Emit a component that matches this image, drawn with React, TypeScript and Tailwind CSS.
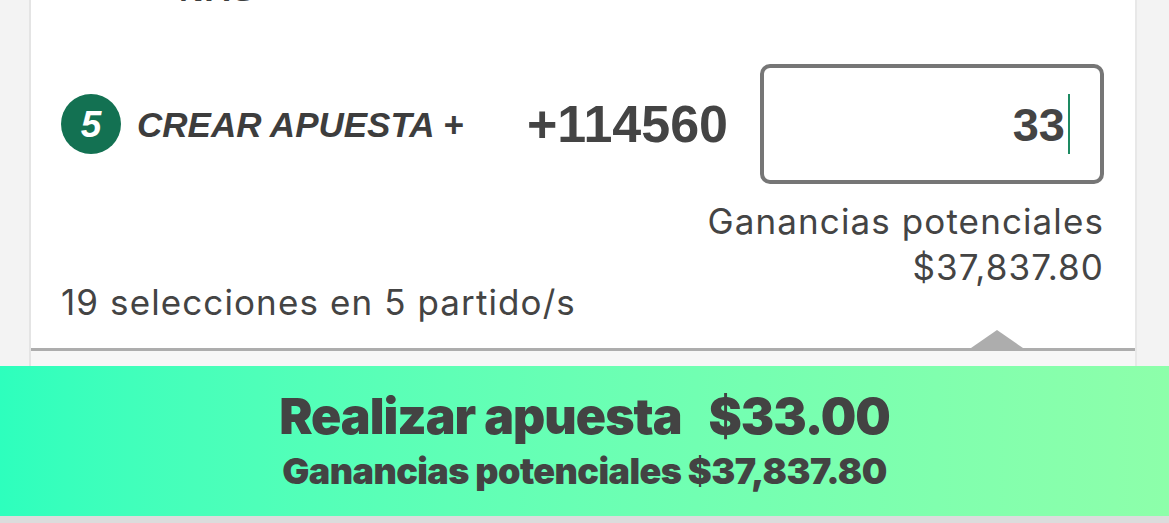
import React from "react";

const sans = "font-['Liberation_Sans',Arial,sans-serif]";
const ui = "font-['Inter','Liberation_Sans',sans-serif]";

export default function App() {
  return (
    <div className="w-[1169px] h-[523px] overflow-hidden bg-[#f1f1f1] flex flex-col">
      <div className="flex flex-1 min-h-0">
        <div className="w-[31px] border-r-2 border-[#e4e4e4] bg-[#f3f3f3]" />
        <div className="w-[1104px] bg-white flex flex-col relative">
          {/* tail of the previous row, scrolled out of view */}
          <div className="h-0 relative">
            <span className={`${sans} absolute left-[148px] top-[-28px] text-[34px] font-bold text-[#3e3e3e] leading-none tracking-[2px]`}>
              NAS
            </span>
          </div>

          <div className="flex items-center mt-[64px] h-[120px]">
            <div className="ml-[30px] w-[60px] h-[60px] rounded-full bg-[#137152] flex items-center justify-center">
              <span className={`${sans} text-white italic font-bold text-[37px] leading-none`}>5</span>
            </div>
            <span className={`${sans} ml-[16px] italic font-bold text-[35px] text-[#3d3d3d] leading-none`}>
              CREAR APUESTA +
            </span>
            <span className={`${sans} ml-auto mr-[32px] font-bold text-[52px] text-[#444] leading-none`}>
              +114560
            </span>
            <div className="mr-[31px] w-[344px] h-[120px] rounded-[10px] border-4 border-[#767676] flex items-center justify-end pr-[30px]">
              <span className={`${sans} font-bold text-[47px] text-[#444] leading-none`}>33</span>
              <span className="ml-[3px] w-[2px] h-[60px] bg-[#1d8a62]" />
            </div>
          </div>

          <div className={`${ui} flex justify-between items-start mt-[14px] pl-[30px] pr-[31px] text-[35px] text-[#444] leading-[46px] tracking-[1.1px]`}>
            <span className="mt-[81px]">19 selecciones en 5 partido/s</span>
            <div className="flex flex-col items-end">
              <span>Ganancias potenciales</span>
              <span>$37,837.80</span>
            </div>
          </div>

          <div className="mt-auto relative h-[3px] bg-[#adadad]">
            <div className="absolute right-[112px] bottom-[3px] w-0 h-0 border-l-[26px] border-r-[26px] border-b-[18px] border-l-transparent border-r-transparent border-b-[#adadad]" />
          </div>
          <div className="h-[15px] bg-[#f7f7f7]" />
        </div>
        <div className="flex-1 border-l-2 border-[#e8e8e8] bg-[#f3f3f3]" />
      </div>

      <button className={`${ui} h-[150px] w-full bg-gradient-to-r from-[#2dffbd] to-[#8dffaa] flex flex-col items-center pt-[25px] text-[#434343]`}>
        <span className="font-black text-[50px] leading-none tracking-[-1px]">
          Realizar apuesta&nbsp;&nbsp;&nbsp;$33.00
        </span>
        <span className="mt-[12px] font-black text-[36px] leading-none tracking-[-0.6px]">
          Ganancias potenciales $37,837.80
        </span>
      </button>
      <div className="h-[7px] bg-[#dcdcdc]" />
    </div>
  );
}
